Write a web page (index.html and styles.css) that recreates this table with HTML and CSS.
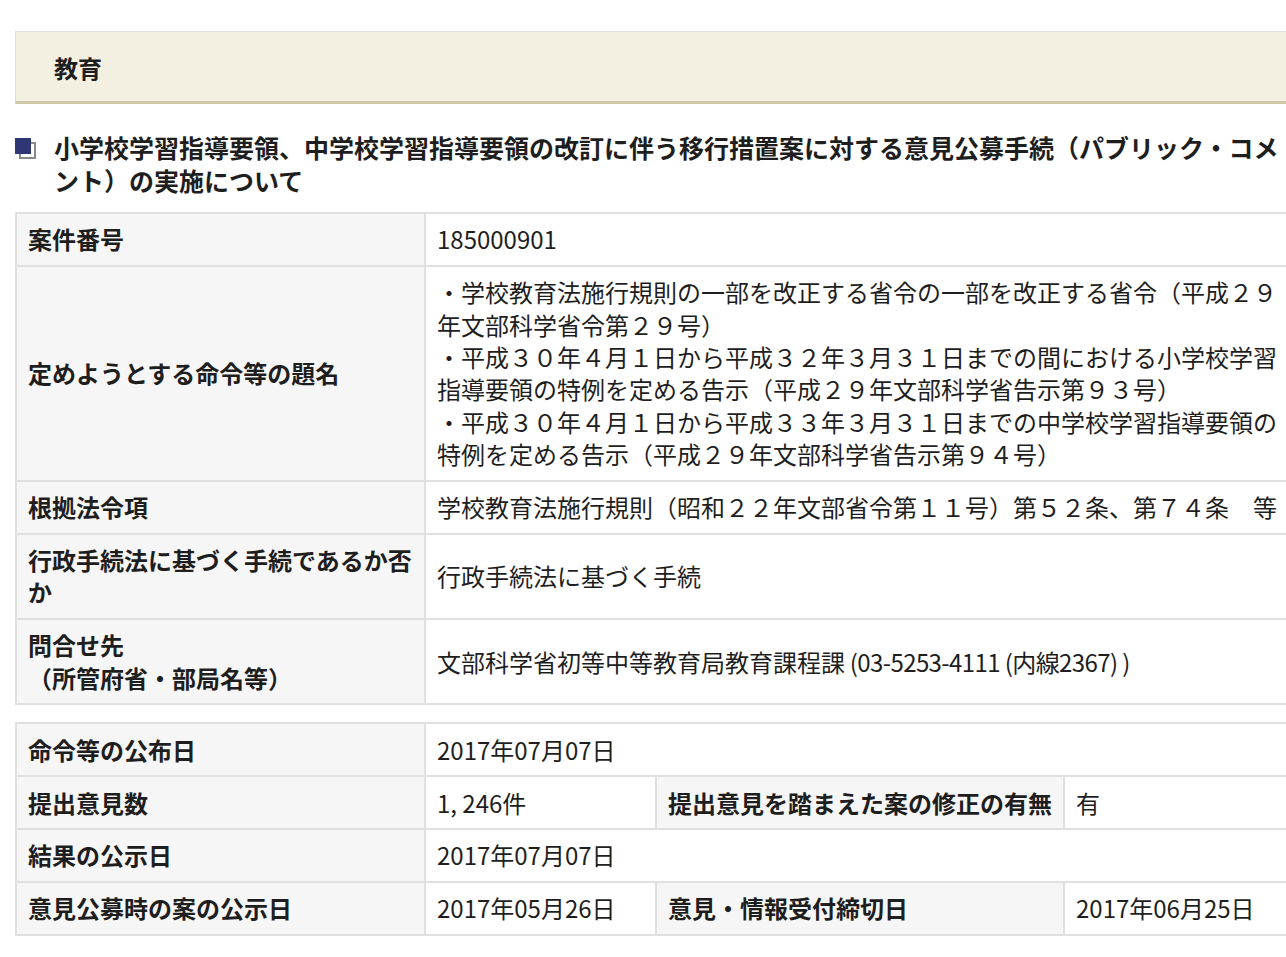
FILE: index.html
```html
<!DOCTYPE html>
<html lang="ja">
<head>
<meta charset="utf-8">
<title>教育</title>
<link rel="stylesheet" href="styles.css">
</head>
<body>
<div class="page">
  <div class="category">
    <h2 class="category-title">教育</h2>
  </div>

  <h1 class="title">
    <span class="title-icon">
      <svg width="22" height="22" viewBox="0 0 22 22" aria-hidden="true">
        <rect x="5" y="5" width="15" height="15" fill="#ffffff" stroke="#8a8a8a" stroke-width="2"/>
        <rect x="0" y="0" width="16" height="16" fill="#2f3674"/>
      </svg>
    </span>
    <span class="title-text">小学校学習指導要領、中学校学習指導要領の改訂に伴う移行措置案に対する意見公募手続（パブリック・コメント）の実施について</span>
  </h1>

  <table class="info">
    <colgroup>
      <col class="col-label">
      <col>
    </colgroup>
    <tbody>
      <tr>
        <th>案件番号</th>
        <td>185000901</td>
      </tr>
      <tr>
        <th>定めようとする命令等の題名</th>
        <td>
          <div>・学校教育法施行規則の一部を改正する省令の一部を改正する省令（平成２９年文部科学省令第２９号）</div>
          <div>・平成３０年４月１日から平成３２年３月３１日までの間における小学校学習指導要領の特例を定める告示（平成２９年文部科学省告示第９３号）</div>
          <div>・平成３０年４月１日から平成３３年３月３１日までの中学校学習指導要領の特例を定める告示（平成２９年文部科学省告示第９４号）</div>
        </td>
      </tr>
      <tr>
        <th>根拠法令項</th>
        <td>学校教育法施行規則（昭和２２年文部省令第１１号）第５２条、第７４条　等</td>
      </tr>
      <tr>
        <th>行政手続法に基づく手続であるか否か</th>
        <td>行政手続法に基づく手続</td>
      </tr>
      <tr>
        <th>問合せ先<br>（所管府省・部局名等）</th>
        <td>文部科学省初等中等教育局教育課程課<span class="narrow"> (03-5253-4111 (内線2367) )</span></td>
      </tr>
    </tbody>
  </table>

  <table class="info info-result">
    <colgroup>
      <col class="col-label">
      <col class="col-value">
      <col class="col-label2">
      <col>
    </colgroup>
    <tbody>
      <tr>
        <th>命令等の公布日</th>
        <td colspan="3">2017年07月07日</td>
      </tr>
      <tr>
        <th>提出意見数</th>
        <td>1, 246件</td>
        <th>提出意見を踏まえた案の修正の有無</th>
        <td>有</td>
      </tr>
      <tr>
        <th>結果の公示日</th>
        <td colspan="3">2017年07月07日</td>
      </tr>
      <tr>
        <th>意見公募時の案の公示日</th>
        <td>2017年05月26日</td>
        <th>意見・情報受付締切日</th>
        <td>2017年06月25日</td>
      </tr>
    </tbody>
  </table>
</div>
</body>
</html>
```

FILE: styles.css
```css
html, body {
  overflow-x: hidden;
}

body {
  margin: 0;
  background: #ffffff;
  color: #1e1e1e;
  font-family: "Noto Sans CJK JP", "Noto Sans", sans-serif;
}

.page {
  width: 1286px;
  padding: 31px 0 40px 15px;
}

.category {
  background: #f3f0e1;
  border-top: 1px solid #dddddd;
  border-left: 1px solid #dddddd;
  border-bottom: 3px solid #cdc8a9;
  padding: 19px 0 16px 38px;
}

.category-title {
  margin: 0;
  font-size: 24px;
  line-height: 34px;
  font-weight: 700;
  color: #1e1e1e;
}

.title {
  display: flex;
  align-items: flex-start;
  margin: 27px 0 0 0;
  font-size: 25px;
  line-height: 33px;
  font-weight: 700;
  color: #1e1e1e;
}

.title-icon {
  flex: 0 0 39px;
  display: flex;
  padding-top: 7px;
}

.title-icon svg {
  display: block;
}

.title-text {
  flex: 1;
}

.info {
  width: 100%;
  table-layout: fixed;
  border-collapse: collapse;
  margin-top: 15px;
  font-size: 24px;
  line-height: 32.4px;
  color: #1e1e1e;
}

.info-result {
  margin-top: 17px;
}

.col-label {
  width: 409px;
}

.col-value {
  width: 231px;
}

.col-label2 {
  width: 408px;
}

.info th,
.info td {
  border: 2px solid #e0e0e0;
  padding: 9.25px 11px;
  text-align: left;
  vertical-align: middle;
}

.info th {
  background: #f6f6f6;
  font-weight: 700;
  padding-right: 8px;
}

.info td {
  background: #ffffff;
  font-weight: 400;
}

.narrow {
  letter-spacing: -0.6px;
}
```
